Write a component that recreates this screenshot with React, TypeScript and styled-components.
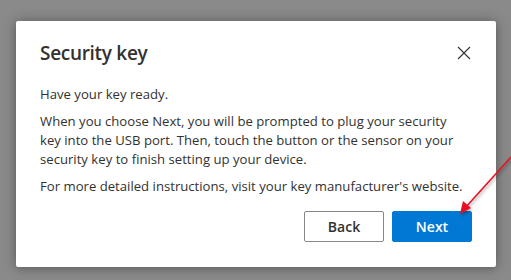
import styled, { createGlobalStyle } from "styled-components";

const GlobalStyle = createGlobalStyle`
  html, body {
    margin: 0;
    padding: 0;
    background: #8a8a8a;
  }
  body {
    width: 511px;
    height: 280px;
    overflow: hidden;
    font-family: "Segoe UI", "Open Sans", "Noto Sans", sans-serif;
  }
`;

// ------ Styled ------ //
const Stage = styled.div`
  position: relative;
  width: 511px;
  height: 280px;
  padding: 21px 0 0 16px;
  box-sizing: border-box;
`;
const Dialog = styled.div`
  width: 480px;
  height: 246px;
  box-sizing: border-box;
  padding: 17px 24px 25px 24px;
  background: #fff;
  border-radius: 2px;
  box-shadow: 0 0 14px rgba(0, 0, 0, 0.28), 0 2px 6px rgba(0, 0, 0, 0.12);
  display: flex;
  flex-direction: column;
`;
const Header = styled.div`
  display: flex;
  justify-content: space-between;
  align-items: center;
  height: 30px;
`;
const Title = styled.h2`
  margin: 0;
  font-size: 19px;
  font-weight: 600;
  color: #323130;
  letter-spacing: -0.3px;
`;
const Close = styled.button`
  border: 0;
  background: none;
  padding: 0;
  width: 14px;
  height: 14px;
  margin-right: 1px;
  color: #323130;
  display: flex;
  svg { display: block; }
`;
const Body = styled.div`
  margin-top: 17px;
  max-width: 424px;
  font-size: 13.15px;
  line-height: 19px;
  color: #323130;
  p {
    margin: 0 0 8px;
  }
`;
const Footer = styled.div`
  margin-top: auto;
  display: flex;
  justify-content: flex-end;
  gap: 8px;
`;
const Button = styled.button<{ primary?: boolean }>`
  width: 80px;
  height: 31px;
  box-sizing: border-box;
  border-radius: 2px;
  font-family: inherit;
  font-size: 14px;
  font-weight: 600;
  border: 1px solid ${p => (p.primary ? "#0078d4" : "#8a8886")};
  background: ${p => (p.primary ? "#0078d4" : "#fff")};
  color: ${p => (p.primary ? "#fff" : "#323130")};
`;
const Arrow = styled.svg`
  position: absolute;
  left: 450px;
  top: 150px;
  overflow: visible;
`;

function App() {
  return (
    <>
      <GlobalStyle />
      <Stage>
        <Dialog>
          <Header>
            <Title>Security key</Title>
            <Close aria-label="Close">
              <svg width="14" height="14" viewBox="0 0 14 14">
                <path d="M1 1 L13 13 M13 1 L1 13" stroke="#323130" strokeWidth="1.1" />
              </svg>
            </Close>
          </Header>
          <Body>
            <p>Have your key ready.</p>
            <p>
              When you choose Next, you will be prompted to plug your security key into the USB
              port. Then, touch the button or the sensor on your security key to finish setting up
              your device.
            </p>
            <p>For more detailed instructions, visit your key manufacturer's website.</p>
          </Body>
          <Footer>
            <Button>Back</Button>
            <Button primary>Next</Button>
          </Footer>
        </Dialog>
        <Arrow width="62" height="70" viewBox="0 0 62 70">
          <defs>
            <filter id="sh" x="-50%" y="-50%" width="200%" height="200%">
              <feDropShadow dx="1" dy="2" stdDeviation="1.5" floodColor="#000" floodOpacity="0.35" />
            </filter>
          </defs>
          <g filter="url(#sh)">
            <line x1="62" y1="6" x2="15" y2="58" stroke="#e81123" strokeWidth="1.6" />
            <polygon points="10,64 13,51 21,58" fill="#e81123" />
          </g>
        </Arrow>
      </Stage>
    </>
  );
}

export default App;
